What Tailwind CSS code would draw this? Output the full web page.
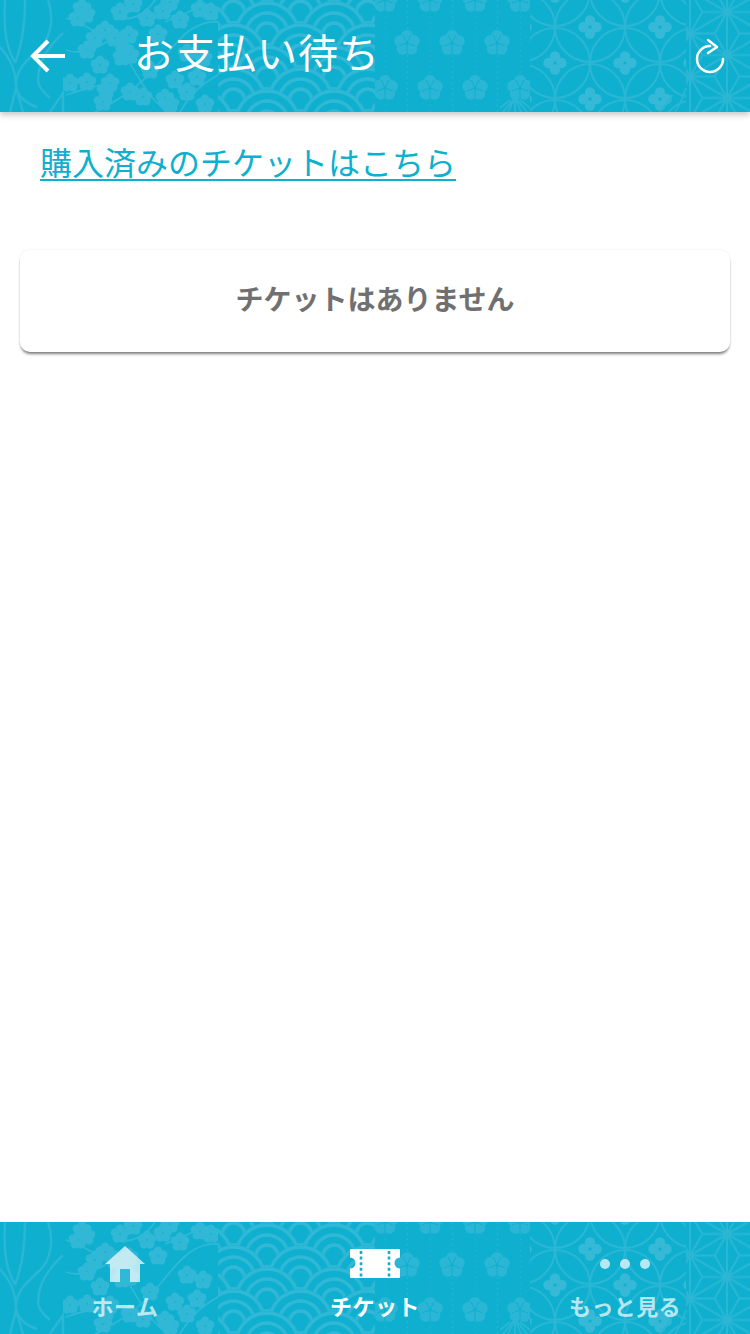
<!doctype html>
<html lang="ja">
<head>
<meta charset="utf-8">
<script src="https://cdn.jsdelivr.net/npm/@tailwindcss/browser@4"></script>
</head>
<body class="bg-white">
<svg width="0" height="0" class="absolute">
  <defs>
    <g id="wave3"><circle r="33" fill="#0fafcf"/><circle r="31" fill="#0fafcf" stroke="#30b8d6" stroke-width="3.4"/><circle r="21" fill="none" stroke="#30b8d6" stroke-width="3.4"/><circle r="11" fill="none" stroke="#30b8d6" stroke-width="3.4"/></g>
    <pattern id="wavep" patternUnits="userSpaceOnUse" x="233.5" y="12" width="67" height="44">
      <use href="#wave3" x="33.5" y="-22"/><use href="#wave3" x="0" y="0"/><use href="#wave3" x="67" y="0"/><use href="#wave3" x="33.5" y="22"/><use href="#wave3" x="0" y="44"/><use href="#wave3" x="67" y="44"/><use href="#wave3" x="33.5" y="66"/>
    </pattern>
    <g id="plumf"><g fill="#2ab6d4"><circle cy="-7" r="6"/><circle cx="6.7" cy="-2" r="6"/><circle cx="4.2" cy="5.7" r="6"/><circle cx="-4.2" cy="5.7" r="6"/><circle cx="-6.7" cy="-2" r="6"/></g><path d="M0 0L3.8 -8M0 0L8 3M0 0L0 10M0 0L-8 3M0 0L-3.8 -8" stroke="#0fafcf" stroke-width="1" fill="none"/><circle r="1.5" fill="#0fafcf"/></g>
    <pattern id="plump" patternUnits="userSpaceOnUse" x="385" y="0" width="45" height="88">
      <line x1="0" y1="0" x2="0" y2="88" stroke="#2ab6d4" stroke-width="1.4" stroke-dasharray="1.5 4"/>
      <line x1="22.5" y1="0" x2="22.5" y2="88" stroke="#2ab6d4" stroke-width="1.4" stroke-dasharray="1.5 4"/>
      <use href="#plumf" x="22" y="43"/><use href="#plumf" x="0" y="88"/><use href="#plumf" x="45" y="88"/><use href="#plumf" x="0" y="0"/><use href="#plumf" x="45" y="0"/>
    </pattern>
    <g id="clover" fill="#35b9d7"><circle cy="-6.5" r="5.2"/><circle cy="6.5" r="5.2"/><circle cx="-6.5" r="5.2"/><circle cx="6.5" r="5.2"/></g>
    <pattern id="shippo" patternUnits="userSpaceOnUse" x="520" y="27" width="70" height="72">
      <g fill="none" stroke="#2ab6d4" stroke-width="2"><circle cx="0" cy="0" r="35"/><circle cx="70" cy="0" r="35"/><circle cx="0" cy="72" r="35"/><circle cx="70" cy="72" r="35"/><circle cx="35" cy="36" r="35"/></g>
      <use href="#clover" x="0" y="0"/><use href="#clover" x="70" y="0"/><use href="#clover" x="0" y="72"/><use href="#clover" x="70" y="72"/><use href="#clover" x="35" y="36"/>
    </pattern>
    <pattern id="asa" patternUnits="userSpaceOnUse" x="690" y="-9.5" width="74" height="43">
      <g fill="none" stroke="#2ab6d4" stroke-width="2">
        <path d="M0 0V43M37 -21.5V64.5M74 0V43M0 0L74 43M0 43L74 0M0 0L37 -21.5L74 0M0 43L37 64.5L74 43"/>
        <path d="M0 0L12.33 21.5L0 43M12.33 21.5H37M0 0H24.67M37 21.5L24.67 0L37 -21.5M74 0H49.33M37 21.5L49.33 0L37 -21.5"/>
        <path d="M74 0L61.67 21.5L74 43M61.67 21.5H37M0 43H24.67M37 21.5L24.67 43L37 64.5M74 43H49.33M37 21.5L49.33 43L37 64.5"/>
      </g>
      <g fill="#2ab6d4"><circle cx="0" cy="0" r="4"/><circle cx="74" cy="0" r="4"/><circle cx="0" cy="43" r="4"/><circle cx="74" cy="43" r="4"/><circle cx="37" cy="21.5" r="4"/></g>
    </pattern>
    <g id="blos"><circle cx="0" cy="-5" r="4.4"/><circle cx="5" cy="-1.4" r="4.4"/><circle cx="3" cy="4.2" r="4.4"/><circle cx="-3" cy="4.2" r="4.4"/><circle cx="-5" cy="-1.4" r="4.4"/></g>
    <g id="bnr">
      <rect width="750" height="112" fill="#0fafcf"/>
      <g fill="none" stroke="#2ab6d4" stroke-width="2.5">
        <path d="M5 0C3 35 8 50 15 63"/>
        <path d="M25 0C25 30 20 50 15 63"/>
        <path d="M48 0C55 20 50 40 38 50C25 62 16 70 16 85C16 95 25 103 37 107"/>
        <path d="M0 47C7 55 15 65 16 85"/>
        <path d="M63 33C50 45 38 60 38 80C38 88 45 94 50 98"/>
        <path d="M10 112L16 88L23 112"/>
        <path d="M50 112L63 93V112"/>
      </g>
      <svg x="63" y="0" width="155" height="112" viewBox="63 0 155 112">
        <g fill="none" stroke="#30b8d6" stroke-width="1.8">
          <path d="M66 18C95 28 115 45 125 55C140 80 150 100 168 112"/>
          <path d="M218 22C190 20 175 45 160 62C145 82 120 100 95 112"/>
          <path d="M66 50C80 55 95 50 110 40M155 0C145 15 130 22 115 18M218 75C200 85 190 95 180 112M165 22L205 5M66 95C80 90 90 88 100 85"/>
        </g>
        <g fill="#30b8d6">
          <use href="#blos" x="82" y="8"/><use href="#blos" x="78" y="18"/><use href="#blos" x="86" y="14"/><use href="#blos" x="120" y="12"/><use href="#blos" x="133" y="4"/><use href="#blos" x="147" y="18"/><use href="#blos" x="163" y="11"/><use href="#blos" x="170" y="2"/><use href="#blos" x="180" y="20"/><use href="#blos" x="200" y="9"/><use href="#blos" x="211" y="12"/>
          <use href="#blos" x="105" y="30"/><use href="#blos" x="95" y="38"/><use href="#blos" x="115" y="38"/><use href="#blos" x="129" y="35"/><use href="#blos" x="158" y="34"/><use href="#blos" x="187" y="53"/>
          <use href="#blos" x="87" y="50"/><use href="#blos" x="100" y="65"/><use href="#blos" x="125" y="50"/><use href="#blos" x="122" y="57"/><use href="#blos" x="130" y="55"/><use href="#blos" x="203" y="58"/><use href="#blos" x="150" y="70"/>
          <use href="#blos" x="87" y="82"/><use href="#blos" x="110" y="83"/><use href="#blos" x="106" y="90"/><use href="#blos" x="70" y="83"/><use href="#blos" x="175" y="80"/><use href="#blos" x="187" y="92"/><use href="#blos" x="197" y="77"/>
          <use href="#blos" x="143" y="97"/><use href="#blos" x="170" y="104"/><use href="#blos" x="165" y="98"/><use href="#blos" x="103" y="102"/><use href="#blos" x="130" y="92"/><use href="#blos" x="205" y="104"/>
        </g>
      </svg>
      <rect x="218" y="0" width="157" height="112" fill="url(#wavep)"/>
      <rect x="375" y="0" width="155" height="112" fill="url(#plump)"/>
      <rect x="530" y="0" width="156" height="112" fill="url(#shippo)"/>
      <rect x="686" y="0" width="64" height="112" fill="url(#asa)"/>
      <g fill="none" stroke="#2ab6d4" stroke-width="2">
        <path d="M503 112L515 97L527 112M508 112L515 97L521 112M515 90V112M500 108L510 100M530 108L520 100"/>
        <path d="M660 112C665 105 670 100 672 95M686 88C682 100 680 105 675 112"/>
      </g>
    </g>
  </defs>
</svg>

<div class="flex flex-col h-[1334px] w-[750px] overflow-hidden font-['Noto_Sans_CJK_JP',sans-serif]">
  <header class="relative h-[112px] shrink-0 shadow-[0_3px_6px_rgba(0,0,0,0.22)] z-10 flex items-center bg-[#0fafcf]">
    <svg class="absolute inset-0" width="750" height="112"><use href="#bnr"/></svg>
    <div class="relative flex items-center w-full pl-[30px] pr-[25px]">
      <svg width="36" height="34" viewBox="0 0 36 34" fill="none" stroke="#fff" stroke-width="4"><path d="M35 17H3M18 2L3 17L18 32"/></svg>
      <h1 class="ml-[68px] -mt-[10px] text-[40px] leading-[48px] tracking-[1px] text-white font-normal flex-1">お支払い待ち</h1>
      <svg width="30" height="36" viewBox="0 0 30 36" fill="none" stroke="#fff" stroke-width="2.5" stroke-linecap="round" stroke-linejoin="round"><path d="M15 8A13 13 0 1 0 28 21"/><path d="M13 2L22 9L13 15"/></svg>
    </div>
  </header>

  <main class="flex-1 bg-white px-5">
    <a href="#" class="block mt-[26px] ml-5 w-fit text-[32px] leading-[46px] text-[#0fafcf] underline underline-offset-[4px] decoration-2">購入済みのチケットはこちら</a>
    <div class="mt-[66px] h-[102px] rounded-[10px] bg-white shadow-[0_3px_3px_-1px_rgba(0,0,0,0.5),0_0_3px_rgba(0,0,0,0.08)] flex items-center justify-center">
      <p class="-mt-[6px] text-[28px] font-bold text-[#707070]">チケットはありません</p>
    </div>
  </main>

  <footer class="relative h-[112px] shrink-0 bg-[#0fafcf]">
    <svg class="absolute inset-0" width="750" height="112"><use href="#bnr"/></svg>
    <nav class="relative grid grid-cols-3 h-full text-[22px] leading-[30px] font-bold">
      <a href="#" class="flex flex-col items-center pt-[24px] text-white/70">
        <svg class="h-[36px]" width="40" height="36" viewBox="0 0 40 36" fill="#fff" fill-opacity="0.7"><path fill-rule="evenodd" d="M20 0L40 18H35V36H25V23H15V36H5V18H0Z"/></svg>
        <span class="mt-[8px] tracking-[0.5px]">ホーム</span>
      </a>
      <a href="#" class="flex flex-col items-center pt-[24px] text-white">
        <svg class="h-[36px]" width="52" height="36" viewBox="0 0 52 36" fill="#fff"><path d="M2 3H50A1 1 0 0 1 51 4V11.5A5.5 5.5 0 0 0 51 22.5V31A1 1 0 0 1 50 32H2A1 1 0 0 1 1 31V22.5A5.5 5.5 0 0 0 1 11.5V4A1 1 0 0 1 2 3Z"/><path d="M12 5V31M40 5V31" stroke="#0fafcf" stroke-width="2.6" stroke-dasharray="3 2.6"/></svg>
        <span class="mt-[8px] tracking-[0.5px]">チケット</span>
      </a>
      <a href="#" class="flex flex-col items-center pt-[24px] text-white/70">
        <svg class="h-[36px]" width="50" height="36" viewBox="0 0 50 36" fill="#fff" fill-opacity="0.7"><circle cx="5" cy="18" r="5"/><circle cx="25" cy="18" r="5"/><circle cx="45" cy="18" r="5"/></svg>
        <span class="mt-[8px] tracking-[0.4px]">もっと見る</span>
      </a>
    </nav>
  </footer>
</div>
</body>
</html>
